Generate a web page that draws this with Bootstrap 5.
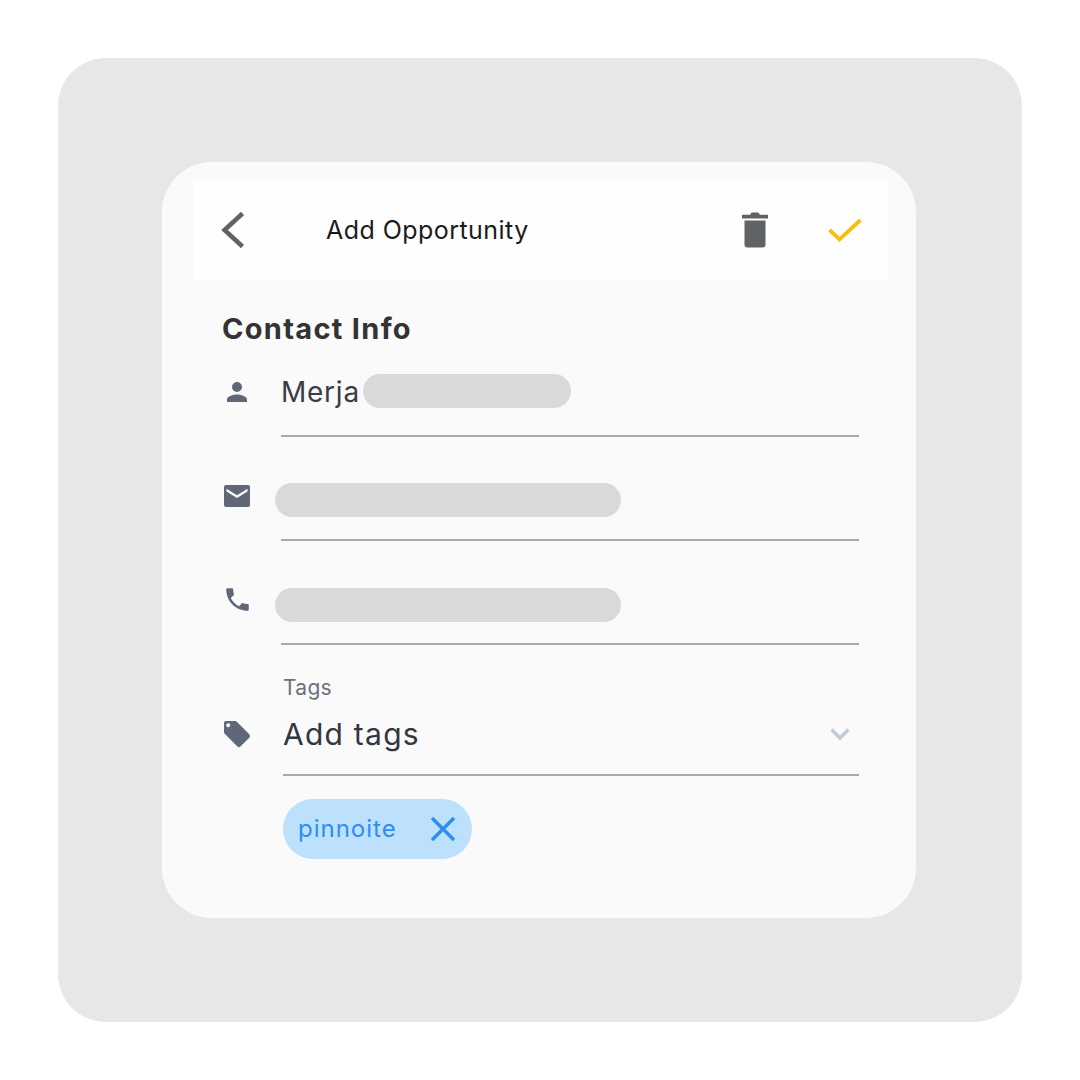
<!DOCTYPE html>
<html lang="en">
<head>
<meta charset="utf-8">
<title>Add Opportunity</title>
<link href="https://cdn.jsdelivr.net/npm/bootstrap@5.3.0/dist/css/bootstrap.min.css" rel="stylesheet">
<style>
html,body{height:1080px;background:#fff;}
body{font-family:Inter,"Liberation Sans",sans-serif;padding:58px;overflow:hidden;}
.stage{width:964px;height:964px;background:#e7e7e7;border-radius:48px;padding:104px 106px 104px 104px;}
.panel{width:754px;height:756px;background:#fafafb;border-radius:50px;padding-top:18px;}
.topbar{height:100px;margin:0 28px 0 31px;background:#fefefe;padding-left:28px;}
.back-ic{width:24px;height:38px;color:#5f6365;}
.top-title{font-size:25px;color:#1b1b1b;margin-left:81px;letter-spacing:.45px;line-height:30px;}
.trash-ic{width:28px;height:36px;margin-left:auto;color:#5f6365;}
.check-ic{width:34px;height:26px;margin-left:59px;margin-right:26px;color:#f6c10e;}
.formarea{padding:0 57px 0 60px;}
.sec-title{font-size:29px;font-weight:700;color:#333;letter-spacing:1.3px;line-height:34px;margin-top:32px;}
.frow{display:flex;}
.ic-col{width:59px;flex:none;}
.ic-col svg{display:block;color:#5f6779;}
.fbody{flex:1;border-bottom:2px solid #aaa;}
.r-name{height:91px;}.r-name .fbody{padding-top:28px;}
.r-name .ic-col{padding-top:31px;}
.r-mail,.r-phone{height:104px;}
.r-mail .fbody{padding-top:46px;}
.r-phone .fbody{padding-top:47px;}
.r-mail .ic-col{padding-top:44px;}
.r-phone .ic-col{padding-top:45px;padding-left:2px;}
.val{font-size:28px;line-height:36px;color:#3a3d44;letter-spacing:.75px;}
.blur-pill{display:block;background:#d9d9d9;border-radius:17px;height:34px;}
.pill-a{width:208px;margin-left:3px;}
.pill-b{width:346px;margin-left:-6px;}
.r-tags{height:131px;}
.r-tags .fbody{margin-left:2px;padding-top:30px;}
.r-tags .ic-col{padding-top:74px;}
.tag-lab{font-size:21px;line-height:26px;color:#6c707a;letter-spacing:.3px;}
.tag-add{font-size:30px;line-height:42px;color:#33363d;letter-spacing:1.250px;margin-top:12px;}
.chev{width:20px;height:14px;color:#c3cbd4;margin-right:9px;margin-top:12px;}
.tag-chip{display:inline-flex;align-items:center;height:60px;width:189px;margin:23px 0 0 61px;background:#bde0fc;border-radius:30px;padding-left:15px;color:#2a8ff0;font-size:24px;letter-spacing:1px;}
.tag-chip svg{width:26px;height:26px;margin-left:auto;margin-right:16px;}
</style>
</head>
<body>
<div class="stage">
  <div class="panel">
    <div class="topbar d-flex align-items-center">
      <svg class="back-ic" viewBox="0 0 24 38" fill="none" stroke="currentColor" stroke-width="4.500"><path d="M21.5 2.5 3.5 19l18 16.5"/></svg>
      <div class="top-title">Add Opportunity</div>
      <svg class="trash-ic" viewBox="0 0 28 36" fill="currentColor"><path d="M1 2.800h26v3.700H1zM9 3 10.500.5h7L19 3z"/><path d="M3.500 8.500h21v24a3 3 0 0 1-3 3h-15a3 3 0 0 1-3-3z"/></svg>
      <svg class="check-ic" viewBox="0 0 34 26" fill="none" stroke="currentColor" stroke-width="3.800"><path d="M1.500 13 11.500 22.500 32.500 3"/></svg>
    </div>
    <div class="formarea">
      <div class="sec-title">Contact Info</div>
      <div class="frow r-name">
        <div class="ic-col"><svg width="30" height="30" viewBox="0 0 24 24" fill="currentColor"><path d="M12 12a4 4 0 1 0 0-8 4 4 0 0 0 0 8zm0 2c-2.700 0-8 1.300-8 4v2h16v-2c0-2.700-5.300-4-8-4z"/></svg></div>
        <div class="fbody d-flex align-items-start"><span class="val">Merja</span><span class="blur-pill pill-a"></span></div>
      </div>
      <div class="frow r-mail">
        <div class="ic-col"><svg width="30" height="30" viewBox="0 0 30 30" fill="currentColor"><path fill-rule="evenodd" d="M4 4h22a2 2 0 0 1 2 2v18a2 2 0 0 1-2 2H4a2 2 0 0 1-2-2V6a2 2 0 0 1 2-2zM4.500 7.800v2.700L15 17l10.500-6.500V7.800L15 14.300z"/></svg></div>
        <div class="fbody"><span class="blur-pill pill-b"></span></div>
      </div>
      <div class="frow r-phone">
        <div class="ic-col"><svg width="30" height="30" viewBox="0 0 24 24" fill="currentColor"><path d="M6.600 10.800c1.400 2.800 3.800 5.100 6.600 6.600l2.200-2.200c.3-.3.700-.4 1-.2 1.100.4 2.300.6 3.600.6.600 0 1 .4 1 1V20c0 .6-.4 1-1 1C10.600 21 3 13.400 3 4c0-.6.400-1 1-1h3.500c.6 0 1 .4 1 1 0 1.300.2 2.500.6 3.600.1.300 0 .7-.2 1z" transform="translate(-1.200 -1.200)"/></svg></div>
        <div class="fbody"><span class="blur-pill pill-b"></span></div>
      </div>
      <div class="frow r-tags">
        <div class="ic-col"><svg width="30" height="30" viewBox="0 0 30 30" fill="currentColor"><path fill-rule="evenodd" d="M4 2h9a2.500 2.500 0 0 1 1.800.7l12.500 12.500a2.500 2.500 0 0 1 0 3.500l-8.600 8.600a2.500 2.500 0 0 1-3.500 0L2.700 14.800A2.500 2.500 0 0 1 2 13V4a2 2 0 0 1 2-2zM6.200 4.200a2 2 0 1 0 0 4 2 2 0 0 0 0-4z"/></svg></div>
        <div class="fbody">
          <div class="tag-lab">Tags</div>
          <div class="d-flex align-items-center justify-content-between">
            <div class="tag-add">Add tags</div>
            <svg class="chev" viewBox="0 0 20 14" fill="none" stroke="currentColor" stroke-width="3.500"><path d="M1.500 2.500 10 11l8.500-8.500"/></svg>
          </div>
        </div>
      </div>
      <div class="tag-chip"><span>pinnoite</span>
        <svg viewBox="0 0 26 26" fill="none" stroke="currentColor" stroke-width="3.400"><path d="M2 2l22 22M24 2 2 24"/></svg>
      </div>
    </div>
  </div>
</div>
<script src="https://cdn.jsdelivr.net/npm/bootstrap@5.3.0/dist/js/bootstrap.bundle.min.js"></script>
</body>
</html>
